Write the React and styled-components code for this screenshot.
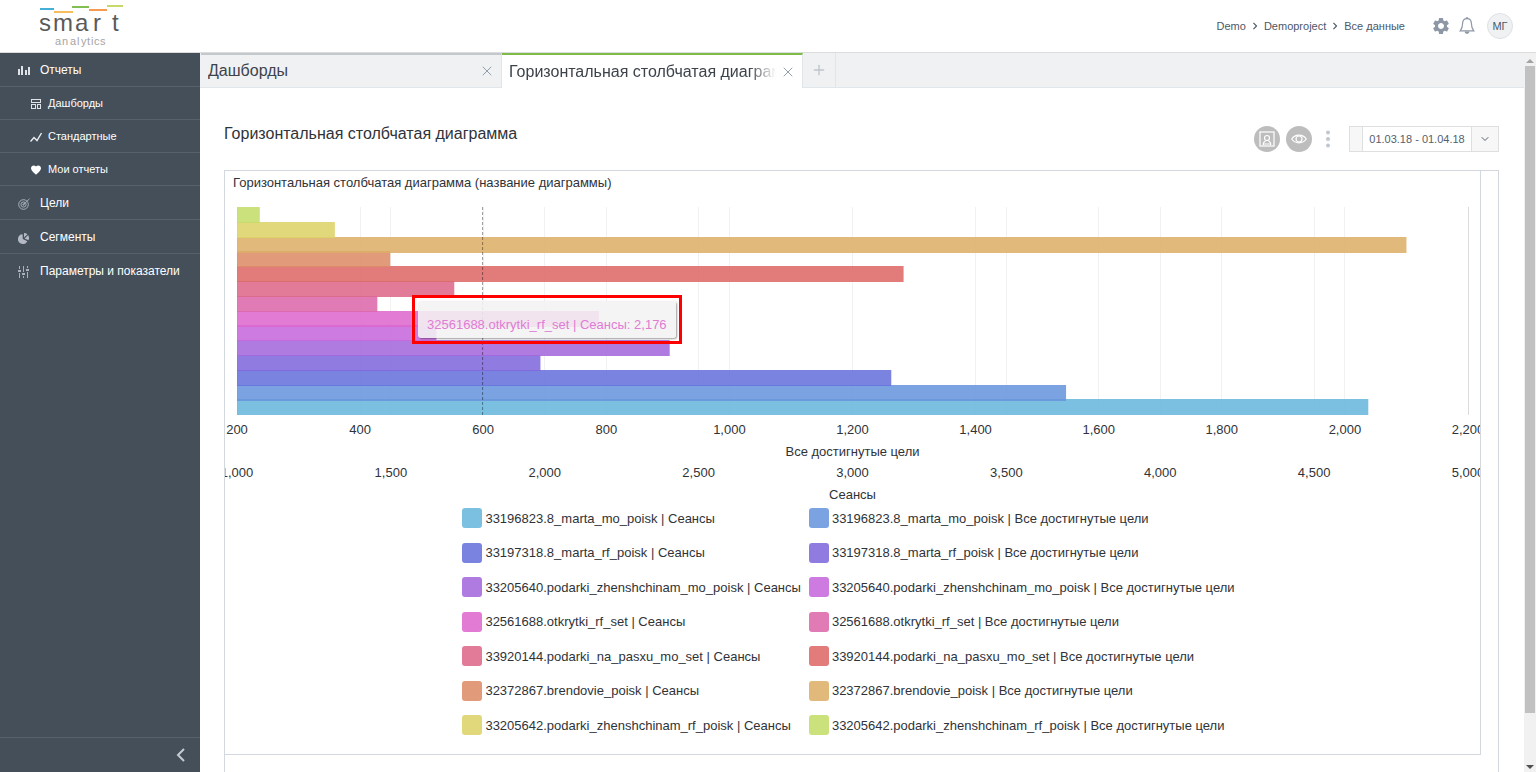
import React from 'react';
import styled, {createGlobalStyle} from "styled-components";
import {MdSettings, MdFavorite, MdChevronRight} from "react-icons/md";
import {X, Plus, ChevronDown} from "lucide-react";

const font = `"Liberation Sans", Arial, sans-serif`
const borderColor = "#d3d8df"

const PLOT_HEIGHT = 208
const palette = [
    "#67b7dc", "#6794dc", "#6771dc", "#8067dc", "#a367dc", "#c767dc", "#dc67ce",
    "#dc67ab", "#dc6788", "#dc6967", "#dc8c67", "#dcaf67", "#dcd267", "#c3dc67"
]

// value is the bar length in percents of the plot width, from the bottom bar to the top one
const series = [
    {name: "33196823.8_marta_mo_poisk | Сеансы", value: 91.9},
    {name: "33196823.8_marta_mo_poisk | Все достигнутые цели", value: 67.35},
    {name: "33197318.8_marta_rf_poisk | Сеансы", value: 53.15},
    {name: "33197318.8_marta_rf_poisk | Все достигнутые цели", value: 24.65},
    {name: "33205640.podarki_zhenshchinam_mo_poisk | Сеансы", value: 35.15},
    {name: "33205640.podarki_zhenshchinam_mo_poisk | Все достигнутые цели", value: 16.2},
    {name: "32561688.otkrytki_rf_set | Сеансы", value: 29.4},
    {name: "32561688.otkrytki_rf_set | Все достигнутые цели", value: 11.4},
    {name: "33920144.podarki_na_pasxu_mo_set | Сеансы", value: 17.65},
    {name: "33920144.podarki_na_pasxu_mo_set | Все достигнутые цели", value: 54.15},
    {name: "32372867.brendovie_poisk | Сеансы", value: 12.45},
    {name: "32372867.brendovie_poisk | Все достигнутые цели", value: 95},
    {name: "33205642.podarki_zhenshchinam_rf_poisk | Сеансы", value: 7.95},
    {name: "33205642.podarki_zhenshchinam_rf_poisk | Все достигнутые цели", value: 1.85},
]

const goalTicks = ["200", "400", "600", "800", "1,000", "1,200", "1,400", "1,600", "1,800", "2,000", "2,200"]
const sessionTicks = ["1,000", "1,500", "2,000", "2,500", "3,000", "3,500", "4,000", "4,500", "5,000"]

const percent = (index, list) => `${index * 100 / (list.length - 1)}%`

const Logo = () => (
    <svg width="84" height="44" viewBox="0 0 84 44" role="img" aria-label="smart analytics">
        <rect x="0" y="4" width="14" height="2" fill="#45afd8"/>
        <rect x="14" y="7" width="19" height="2" fill="#f6bd5c"/>
        <rect x="32" y="2" width="17" height="2" fill="#81bf55"/>
        <rect x="49" y="5" width="18" height="2" fill="#f59a4e"/>
        <rect x="67" y="1" width="16" height="2" fill="#c5da68"/>
        <text x="-1 13 35 53 72" y="27" fontFamily={font} fontSize="24" fill="#5a5a5a">smart</text>
        <text x="15 22 30 37 41 47 51 54 60" y="41" fontFamily={font} fontSize="11" fill="#a5a5a5">analytics</text>
    </svg>
)

const BarsIcon = () => (
    <svg width="12" height="10" viewBox="0 0 12 10" fill="#dfe3e7">
        <rect x="0" y="3" width="2" height="6"/>
        <rect x="3" y="0" width="2" height="9"/>
        <rect x="7" y="4" width="2" height="5"/>
        <rect x="10" y="1" width="2" height="8"/>
    </svg>
)
const BoardIcon = () => (
    <svg width="12" height="12" viewBox="0 0 12 12" fill="none" stroke="#dfe3e7">
        <rect x="1.5" y="1.5" width="9" height="3"/>
        <rect x="1.5" y="6.5" width="4" height="4"/>
        <rect x="7.5" y="6.5" width="3" height="4"/>
    </svg>
)
const LineIcon = () => (
    <svg width="12" height="12" viewBox="0 0 12 12" fill="none" stroke="#eceef0" strokeWidth="1.4">
        <path d="M0.5 10.5L4 6.5L7 9.5L11.5 2"/>
    </svg>
)
const TargetIcon = () => (
    <svg width="12" height="12" viewBox="0 0 12 12" fill="none" stroke="#a9b0bb">
        <circle cx="5.5" cy="6.5" r="4.8"/>
        <circle cx="5.5" cy="6.5" r="2.6"/>
        <circle cx="5.5" cy="6.5" r="0.7"/>
        <path d="M5.5 6.5L11.5 0.8"/>
    </svg>
)
const PieIcon = () => (
    <svg width="12" height="12" viewBox="0 0 12 12" fill="#b3b9c5">
        <path d="M4.6 2.2A4.9 4.9 0 1 0 9.3 9.2L4.8 7Z"/>
        <path d="M6 1A5 5 0 0 1 9.4 2.3L6 5.6Z"/>
        <path d="M10.2 3.1A5 5 0 0 1 10.4 8.2L6.6 6.5Z"/>
    </svg>
)
const SlidersIcon = () => (
    <svg width="12" height="12" viewBox="0 0 12 12" fill="#a9b0bb">
        <path d="M1 0h1v3H1zM0 4h3v2H0zM1 7h1v5H1zM5 0h1v6H5zM4 7h3v2H4zM5 10h1v2H5zM9 0h1v2H9zM8 3h3v2H8zM9 6h1v6H9z"/>
    </svg>
)
const BellIcon = () => (
    <svg width="16" height="18" viewBox="0 0 16 18" fill="none" stroke="#8d97a5" strokeWidth="1.2">
        <path d="M8 1.6C5 1.6 3.6 4 3.6 6.6C3.6 10.4 2.9 11.8 1.2 13.9H14.8C13.1 11.8 12.4 10.4 12.4 6.6C12.4 4 11 1.6 8 1.6Z"/>
        <path d="M7.2 1.6C7.2 0.4 8.8 0.4 8.8 1.6"/>
        <path d="M5.6 14.5C5.9 17.6 10.1 17.6 10.4 14.5Z" fill="#8d97a5" stroke="none"/>
    </svg>
)
const PortraitIcon = () => (
    <svg width="16" height="16" viewBox="0 0 16 16" fill="none" stroke="#fff" strokeWidth="1.2">
        <rect x="1" y="1" width="14" height="14"/>
        <circle cx="8" cy="7" r="2.5"/>
        <path d="M4.4 14V12.2C4.4 11 5.6 10.8 6.4 10M11.6 14V12.2C11.6 11 10.4 10.8 9.6 10M4.4 13H11.6"/>
    </svg>
)
const EyeIcon = () => (
    <svg width="16" height="12" viewBox="0 0 16 12" fill="none" stroke="#fff" strokeWidth="1.2">
        <path d="M0.7 6C2.6 3.2 5 2.2 8 2.2S13.4 3.2 15.3 6C13.4 8.8 11 9.8 8 9.8S2.6 8.8 0.7 6Z"/>
        <circle cx="8" cy="6" r="3"/>
    </svg>
)

const menu = [
    {title: "Отчеты", icon: <BarsIcon/>},
    {title: "Дашборды", icon: <BoardIcon/>, sub: true},
    {title: "Стандартные", icon: <LineIcon/>, sub: true},
    {title: "Мои отчеты", icon: <MdFavorite size={12} color="#fff"/>, sub: true},
    {title: "Цели", icon: <TargetIcon/>},
    {title: "Сегменты", icon: <PieIcon/>},
    {title: "Параметры и показатели", icon: <SlidersIcon/>},
]

const Chart = () => (
    <Plot>
        <svg width="100%" height="294" overflow="visible" role="img" aria-label="Горизонтальная столбчатая диаграмма">
            {goalTicks.map((tick, i) => (
                <GridLine key={tick} x1={percent(i, goalTicks)} x2={percent(i, goalTicks)} y1="0" y2={PLOT_HEIGHT}
                          $edge={i === 0 || i === goalTicks.length - 1}/>
            ))}
            {sessionTicks.slice(1, -1).map((tick, i) => (
                <GridLine key={tick} x1={percent(i + 1, sessionTicks)} x2={percent(i + 1, sessionTicks)} y1="0"
                          y2={PLOT_HEIGHT}/>
            ))}
            {series.map(({name, value}, i) => {
                const top = Math.round((series.length - 1 - i) * 14.8)
                return <rect key={name} x="0" y={top} width={`${value}%`} height="16" fill={palette[i]}
                             fillOpacity="0.87"/>
            })}
            <Cursor x1="19.95%" x2="19.95%" y1="0" y2={PLOT_HEIGHT}/>
            {goalTicks.map((tick, i) => (
                <AxisText key={tick} x={percent(i, goalTicks)} y="227">{tick}</AxisText>
            ))}
            <AxisText x="50%" y="249">Все достигнутые цели</AxisText>
            {sessionTicks.map((tick, i) => (
                <AxisText key={tick} x={percent(i, sessionTicks)} y="270">{tick}</AxisText>
            ))}
            <AxisText x="50%" y="292">Сеансы</AxisText>
        </svg>
        <Highlight>
            <Tooltip>32561688.otkrytki_rf_set | Сеансы: 2,176</Tooltip>
        </Highlight>
    </Plot>
)

const App = () => {
    return (
        <Page>
            <GlobalStyle/>
            <Header>
                <a href="#"><Logo/></a>
                <HeaderRight>
                    <Breadcrumbs>
                        <Crumb href="#">Demo</Crumb>
                        <MdChevronRight size={14}/>
                        <Crumb href="#">Demoproject</Crumb>
                        <MdChevronRight size={14}/>
                        <Crumb href="#">Все данные</Crumb>
                    </Breadcrumbs>
                    <HeaderIcons>
                        <IconButton aria-label="Настройки"><MdSettings size={20} color="#8d97a5"/></IconButton>
                        <IconButton aria-label="Уведомления"><BellIcon/></IconButton>
                    </HeaderIcons>
                    <Avatar>МГ</Avatar>
                </HeaderRight>
            </Header>
            <Body>
                <Sidebar>
                    <nav>
                        {menu.map(({title, icon, sub}) => (
                            <MenuItem key={title} href="#" $sub={sub}>
                                <MenuIcon>{icon}</MenuIcon>
                                {title}
                            </MenuItem>
                        ))}
                    </nav>
                    <Collapse aria-label="Свернуть меню">
                        <svg width="10" height="14" viewBox="0 0 10 14" fill="none" stroke="#c6cbd1" strokeWidth="2">
                            <path d="M8 1L2 7L8 13"/>
                        </svg>
                    </Collapse>
                </Sidebar>
                <Main>
                    <Tabs>
                        <Tab>
                            <TabTitle>Дашборды</TabTitle>
                            <IconButton aria-label="Закрыть вкладку"><X size={16} strokeWidth={1.5}/></IconButton>
                        </Tab>
                        <Tab $active={true}>
                            <TabTitle $fade={true}>Горизонтальная столбчатая диаграмма</TabTitle>
                            <IconButton aria-label="Закрыть вкладку"><X size={16} strokeWidth={1.5}/></IconButton>
                        </Tab>
                        <AddTab aria-label="Добавить вкладку"><Plus size={16} strokeWidth={2}/></AddTab>
                    </Tabs>
                    <Content>
                        <TitleRow>
                            <Title>Горизонтальная столбчатая диаграмма</Title>
                            <Actions>
                                <RoundButton aria-label="Аудитория"><PortraitIcon/></RoundButton>
                                <RoundButton aria-label="Просмотр"><EyeIcon/></RoundButton>
                                <MoreButton aria-label="Ещё">
                                    <svg width="4" height="18" viewBox="0 0 4 18" fill="#c0c7d0">
                                        <circle cx="2" cy="2.5" r="2"/>
                                        <circle cx="2" cy="9" r="2"/>
                                        <circle cx="2" cy="15.5" r="2"/>
                                    </svg>
                                </MoreButton>
                                <DatePicker>
                                    <DateEdge/>
                                    <DateInput aria-label="Период" defaultValue="01.03.18 - 01.04.18"/>
                                    <DateToggle aria-label="Выбрать период"><ChevronDown size={12}/></DateToggle>
                                </DatePicker>
                            </Actions>
                        </TitleRow>
                        <Board>
                            <Card>
                                <CardTitle>Горизонтальная столбчатая диаграмма (название диаграммы)</CardTitle>
                                <Chart/>
                                <Legend>
                                    {series.map(({name}, i) => (
                                        <LegendItem key={name}>
                                            <Swatch $color={palette[i]}/>
                                            {name}
                                        </LegendItem>
                                    ))}
                                </Legend>
                            </Card>
                        </Board>
                    </Content>
                </Main>
                <ScrollBar>
                    <svg width="8" height="4" viewBox="0 0 8 4" fill="#a3a3a3"><path d="M0 4L4 0L8 4Z"/></svg>
                    <ScrollTrack><ScrollThumb/></ScrollTrack>
                    <svg width="8" height="4" viewBox="0 0 8 4" fill="#505050"><path d="M0 0L4 4L8 0Z"/></svg>
                </ScrollBar>
            </Body>
        </Page>
    );
};

const GlobalStyle = createGlobalStyle`
* {
box-sizing: border-box;
}
body {
margin: 0;
background: #fff;
font-family: ${font};
font-size: 13px;
color: #2f3338;
}
button, input {
font-family: inherit;
margin: 0;
}
svg {
display: block;
flex-shrink: 0;
}
`
const Page = styled.div`
display: flex;
flex-direction: column;
height: 100vh;
overflow: hidden;
`
const Header = styled.header`
display: flex;
justify-content: space-between;
align-items: center;
flex-shrink: 0;
height: 53px;
padding: 0 23px 0 40px;
border-bottom: 1px solid #dcdcdc;
`
const HeaderRight = styled.div`
display: flex;
align-items: center;
gap: 12px;
`
const Breadcrumbs = styled.nav`
display: flex;
align-items: center;
gap: 2px;
margin-right: 14px;
color: #4d5866;
`
const Crumb = styled.a`
font-size: 11px;
color: #4d5866;
text-decoration: none;
`
const HeaderIcons = styled.div`
display: flex;
align-items: center;
gap: 8px;
`
const IconButton = styled.button`
display: flex;
padding: 0;
border: none;
background: none;
color: #949dab;
`
const Avatar = styled.button`
width: 26px;
height: 26px;
padding: 0;
border: 1px solid #dde1e6;
border-radius: 50%;
background: #f0f1f3;
font-size: 11px;
color: #4d5866;
`
const Body = styled.div`
display: flex;
flex: 1;
min-height: 0;
`
const Sidebar = styled.aside`
display: flex;
flex-direction: column;
justify-content: space-between;
flex-shrink: 0;
width: 200px;
background: #444f5a;
`
const MenuItem = styled.a`
display: flex;
align-items: center;
gap: ${({$sub}) => $sub ? "6px" : "10px"};
height: ${({$sub}) => $sub ? "33px" : "34px"};
padding-left: ${({$sub}) => $sub ? "30px" : "18px"};
border-bottom: 1px solid #56616c;
font-size: ${({$sub}) => $sub ? "11px" : "12px"};
color: #fff;
text-decoration: none;
&:last-child{
border-bottom: none;
}
`
const MenuIcon = styled.span`
display: flex;
width: 12px;
padding-top: 2px;
`
const Collapse = styled.button`
display: flex;
justify-content: flex-end;
align-items: center;
height: 35px;
padding: 0 14px;
border: none;
border-top: 1px solid #56616c;
background: none;
`
const Main = styled.main`
display: flex;
flex-direction: column;
flex: 1;
min-width: 0;
`
const Tabs = styled.div`
display: flex;
flex-shrink: 0;
height: 35px;
padding-left: 1px;
background: #f0f1f3;
border-bottom: 1px solid #e1e6ea;
`
const Tab = styled.div`
display: flex;
align-items: center;
justify-content: space-between;
gap: 4px;
width: 301px;
height: ${({$active}) => $active ? "35px" : "34px"};
padding: 0 6px 0 7px;
border-top: 2px solid ${({$active}) => $active ? "#7fbb4a" : "#c3c8cd"};
border-right: 1px solid #e1e6ea;
background: ${({$active}) => $active ? "#fff" : "none"};
`
const TabTitle = styled.span`
flex: 1;
overflow: hidden;
white-space: nowrap;
font-size: 16px;
color: #3d434a;
mask-image: ${({$fade}) => $fade ? "linear-gradient(to right, #000 90%, transparent)" : "none"};
`
const AddTab = styled.button`
display: flex;
align-items: center;
justify-content: center;
width: 33px;
padding: 0;
border: none;
border-right: 1px solid #e1e6ea;
background: none;
color: #c0c5cc;
`
const Content = styled.div`
display: flex;
flex-direction: column;
flex: 1;
padding: 38px 25px 0 24px;
`
const TitleRow = styled.div`
display: flex;
justify-content: space-between;
align-items: flex-start;
height: 44px;
`
const Title = styled.h1`
margin: 0;
font-size: 16px;
line-height: 16px;
font-weight: 400;
`
const Actions = styled.div`
display: flex;
align-items: center;
gap: 6px;
`
const RoundButton = styled.button`
display: flex;
align-items: center;
justify-content: center;
width: 26px;
height: 26px;
padding: 0;
border: none;
border-radius: 50%;
background: #bdbdbd;
`
const MoreButton = styled(IconButton)`
margin: 0 13px 0 8px;
`
const DatePicker = styled.div`
display: flex;
height: 26px;
border: 1px solid #dedfe1;
background: #f7f7f7;
`
const DateEdge = styled.span`
width: 12px;
`
const DateInput = styled.input`
width: 110px;
padding: 0;
border: solid #dedfe1;
border-width: 0 1px;
background: #fff;
font-size: 11px;
text-align: center;
color: #56606c;
`
const DateToggle = styled.button`
display: flex;
align-items: center;
justify-content: center;
width: 26px;
padding: 0;
border: none;
background: none;
color: #56606c;
`
const Board = styled.section`
flex: 1;
padding-right: 17px;
border: 1px solid ${borderColor};
border-bottom: none;
`
const Card = styled.article`
height: 584px;
overflow: hidden;
border: solid ${borderColor};
border-width: 0 1px 1px 0;
`
const CardTitle = styled.h2`
margin: 0;
padding: 4px 8px 0;
font-size: 13px;
line-height: 16px;
font-weight: 400;
`
const Plot = styled.div`
position: relative;
margin: 16px 12px 0;
`
const GridLine = styled.line`
stroke: ${({$edge}) => $edge ? "#dcdcdc" : "#f1f1f1"};
shape-rendering: crispEdges;
`
const Cursor = styled.line`
stroke: #000;
stroke-opacity: 0.4;
stroke-dasharray: 3 2;
`
const AxisText = styled.text`
font-size: 13px;
fill: #2f3338;
text-anchor: middle;
`
// the frame and the hint hang over the bars
const Highlight = styled.div`
position: absolute;
top: 88px;
left: 175px;
padding: 3px;
border: 3px solid #ff0000;
`
const Tooltip = styled.div`
padding: 15px 9px 4px;
border-radius: 3px;
background: rgba(243, 243, 243, 0.88);
box-shadow: 1px 1px 2px rgba(0, 0, 0, 0.4);
font-size: 13px;
line-height: 18px;
white-space: nowrap;
color: #e07cd4;
`
const Legend = styled.ul`
display: grid;
grid-template-columns: max-content max-content;
justify-content: center;
align-content: space-between;
height: 227px;
margin: 7px 0 0;
padding: 0;
list-style: none;
`
const LegendItem = styled.li`
display: flex;
align-items: center;
gap: 3px;
height: 20px;
padding-right: 8px;
`
const Swatch = styled.span`
width: 20px;
height: 20px;
border-radius: 3px;
background: ${({$color}) => $color};
opacity: 0.87;
`
const ScrollBar = styled.div`
display: flex;
flex-direction: column;
align-items: center;
flex-shrink: 0;
width: 12px;
padding: 6px 0 3px;
background: #f1f1f1;
`
const ScrollTrack = styled.div`
flex: 1;
width: 10px;
padding: 3px 0;
`
const ScrollThumb = styled.div`
height: 93%;
background: #c1c1c1;
`
export default App;
